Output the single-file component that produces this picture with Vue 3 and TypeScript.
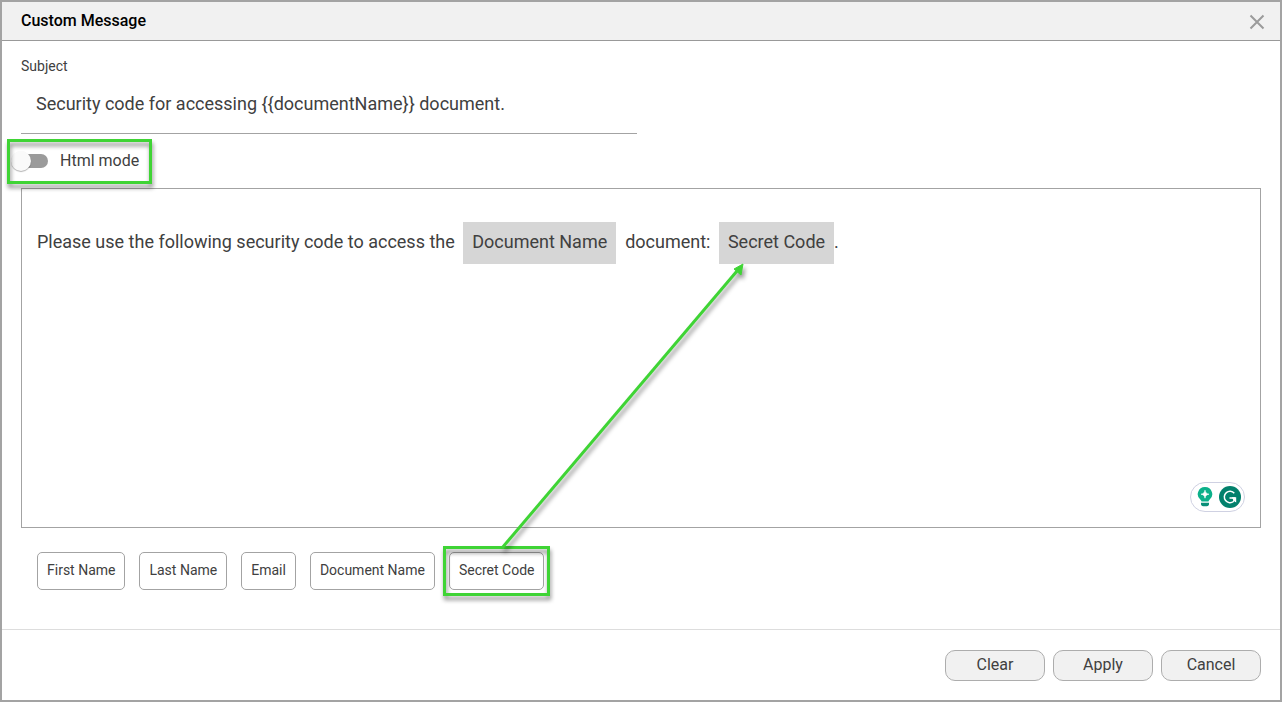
<script setup lang="ts">
import { ref } from 'vue'

interface Token {
  label: string
  marked?: boolean
}

const subject = ref('Security code for accessing {{documentName}} document.')
const htmlMode = ref(false)

const tokens: Token[] = [
  { label: 'First Name' },
  { label: 'Last Name' },
  { label: 'Email' },
  { label: 'Document Name' },
  { label: 'Secret Code', marked: true },
]
const actions: string[] = ['Clear', 'Apply', 'Cancel']
</script>

<template>
  <section class="dialog" role="dialog" aria-labelledby="dialog-title">
    <header class="header">
      <h1 id="dialog-title" class="title">Custom Message</h1>
      <button class="close" type="button" aria-label="Close">
        <svg width="16" height="16" viewBox="0 0 16 16" fill="none" stroke="#9b9b9b" stroke-width="2">
          <path d="M1.5 1.5 14.5 14.5M14.5 1.5 1.5 14.5" />
        </svg>
      </button>
    </header>

    <main class="body">
      <label class="subject-label" for="subject">Subject</label>
      <input id="subject" v-model="subject" class="subject" type="text" />

      <label class="mode highlight">
        <input v-model="htmlMode" class="switch" type="checkbox" role="switch" />
        <span>Html mode</span>
      </label>

      <div class="editor">
        <p class="message" contenteditable="true" role="textbox" aria-label="Message" spellcheck="false">Please use the following security code to access the <span class="field">Document Name</span>&nbsp; document: <span class="field">Secret Code</span>.</p>
        <div class="assistant">
          <svg width="16" height="20" viewBox="0 0 16 20">
            <path d="M8 0a7.200 7.200 0 0 0-4.300 13c.5.400.7.900.8 1.500h7c.1-.6.3-1.100.8-1.500A7.200 7.200 0 0 0 8 0Z" fill="#0bb08a" />
            <path d="M8 3.200c.5 2.600 1.400 3.500 4 4-2.600.5-3.500 1.400-4 4-.5-2.600-1.400-3.500-4-4 2.600-.5 3.500-1.400 4-4Z" fill="#fff" stroke="#fff" stroke-width=".6" />
            <path d="M4 15.800h8v1.200c0 1.400-.8 2.200-2.200 2.200H6.200C4.800 19.200 4 18.400 4 17Z" fill="#0a8f78" />
          </svg>
          <svg width="22" height="22" viewBox="0 0 22 22">
            <circle cx="11" cy="11" r="11" fill="#02806c" />
            <path d="M15.300 7.200A5.700 5.700 0 1 0 14.500 15.500M10.500 12H15.500Q15.500 14 14.500 15.500" fill="none" stroke="#fff" stroke-width="1.500" />
            <path d="M12.800 11.300H17.200V16.600L15.600 15.200 14 13.600Z" fill="#fff" />
          </svg>
        </div>
      </div>

      <div class="tokens">
        <button
          v-for="token in tokens"
          :key="token.label"
          type="button"
          class="token"
          :class="{ highlight: token.marked }"
        >{{ token.label }}</button>
      </div>
    </main>

    <footer class="footer">
      <button v-for="action in actions" :key="action" type="button" class="action">{{ action }}</button>
    </footer>

    <svg class="arrow" width="260" height="300" viewBox="0 0 260 300" aria-hidden="true">
      <path d="M11 295 246 18" fill="none" stroke="#3fd435" stroke-width="3" />
      <path d="M252 11 250 22 243 16Z" fill="#3fd435" stroke="#3fd435" stroke-width="1" />
    </svg>
  </section>
</template>

<style>
body {
  background: #fff;
}
</style>

<style scoped>
.dialog {
  position: relative;
  box-sizing: border-box;
  display: flex;
  flex-direction: column;
  min-height: 100vh;
  border: 2px solid #a3a3a3;
  background: #fff;
  color: #404040;
  font-family: Roboto, "Liberation Sans", sans-serif;
}

button,
input {
  font-family: inherit;
  color: inherit;
}

.header {
  display: flex;
  align-items: center;
  justify-content: space-between;
  height: 38px;
  padding: 0 15px 0 19px;
  border-bottom: 1px solid #999;
  background: #f1f1f1;
}

.title {
  margin: 0;
  color: #000;
  font-size: 16px;
  font-weight: 500;
  line-height: 20px;
}

.close {
  display: flex;
  padding: 0;
  margin-top: 2px;
  border: 0;
  background: none;
}

.body {
  display: flex;
  flex: 1;
  flex-direction: column;
  align-items: flex-start;
  padding: 15px 19px 39px;
}

.subject-label {
  font-size: 14px;
  line-height: 20px;
}

.subject {
  box-sizing: border-box;
  width: calc(50% - 4px);
  height: 58px;
  padding: 0 15px 2px;
  border: 0;
  border-bottom: 1px solid #a3a3a3;
  outline: 0;
  background: transparent;
  font-size: 18px;
}

.mode {
  display: flex;
  align-items: center;
  gap: 12px;
  margin: 15px 0;
  font-size: 16px;
  line-height: 24px;
}

.switch {
  position: relative;
  width: 27px;
  height: 14px;
  margin: 0;
  border-radius: 7px;
  background: #9b9b9b;
  appearance: none;
}

.switch::before {
  position: absolute;
  top: -3px;
  left: -10px;
  width: 20px;
  height: 20px;
  border-radius: 50%;
  background: #fafafa;
  box-shadow: 0 1px 1px rgb(0 0 0 / 30%);
  content: "";
}

.switch:checked::before {
  left: 13px;
}

.highlight {
  position: relative;
}

.highlight::after {
  position: absolute;
  inset: -7px;
  border: 3px solid #3fd435;
  filter: drop-shadow(1px 4px 2px rgb(0 0 0 / 45%));
  content: "";
  pointer-events: none;
}

.mode.highlight::after {
  inset: -10px -13px -11px -14px;
}

.editor {
  box-sizing: border-box;
  display: flex;
  flex: 1;
  flex-direction: column;
  justify-content: space-between;
  align-self: stretch;
  padding: 32px 15px 15px;
  border: 1px solid #a3a3a3;
}

.message {
  margin: 0;
  outline: 0;
  font-size: 18px;
  line-height: 42px;
}

.field {
  display: inline-block;
  margin-left: 4px;
  padding: 0 9px 2px;
  background: #d6d6d6;
  line-height: 40px;
}

.assistant {
  box-sizing: border-box;
  display: flex;
  align-items: center;
  align-self: flex-end;
  gap: 6px;
  height: 30px;
  padding: 0 3px 0 6px;
  border: 1px solid #cfd1e2;
  border-radius: 15px;
}

.tokens {
  display: flex;
  flex-wrap: wrap;
  gap: 14px;
  padding: 24px 16px 0;
}

.token {
  height: 38px;
  padding: 0 9px 2px;
  border: 1px solid #a3a3a3;
  border-radius: 5px;
  background: #fff;
  font-size: 14px;
}

.footer {
  display: flex;
  justify-content: flex-end;
  gap: 8px;
  padding: 20px 19px 19px;
  border-top: 1px solid #ddd;
}

.action {
  width: 100px;
  height: 31px;
  padding: 0 0 2px;
  border: 1px solid #adadad;
  border-radius: 10px;
  background: #f1f1f1;
  font-size: 16px;
}

.arrow {
  position: absolute;
  top: 251px;
  left: 489px;
  filter: drop-shadow(2px 4px 2px rgb(0 0 0 / 40%));
  pointer-events: none;
}
</style>
